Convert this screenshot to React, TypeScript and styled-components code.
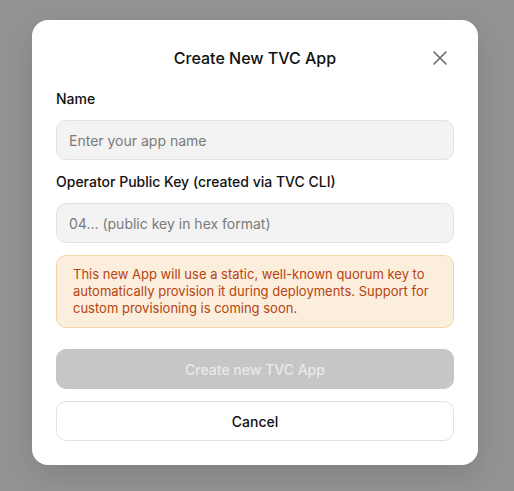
import React from "react";
import styled, { createGlobalStyle } from "styled-components";
import { X } from "lucide-react";

const GlobalStyle = createGlobalStyle`
  html, body {
    margin: 0;
    padding: 0;
    background: #939393;
  }
  * {
    box-sizing: border-box;
  }
  body {
    font-family: Inter, "Noto Sans", "Liberation Sans", sans-serif;
    -webkit-font-smoothing: antialiased;
  }
`;

const Overlay = styled.div`
  min-height: 491px;
  padding: 20px 36px 26px 32px;
  background: #939393;
`;

const Modal = styled.div`
  width: 446px;
  background: #ffffff;
  border-radius: 16px;
  padding: 24px;
  display: flex;
  flex-direction: column;
  box-shadow: 0 10px 30px rgba(0, 0, 0, 0.12);
`;

const Header = styled.div`
  display: grid;
  grid-template-columns: 28px 1fr 28px;
  align-items: center;
  height: 26px;
  margin-bottom: 19px;
`;

const Title = styled.h2`
  grid-column: 2;
  margin: 0;
  text-align: center;
  font-size: 16px;
  line-height: 26px;
  font-weight: 500;
  color: #111111;
`;

const CloseButton = styled.button`
  grid-column: 3;
  width: 28px;
  height: 28px;
  padding: 0;
  border: none;
  background: transparent;
  color: #666666;
  display: flex;
  align-items: center;
  justify-content: center;
  cursor: pointer;
`;

const Label = styled.label`
  display: block;
  font-size: 14px;
  line-height: 20px;
  font-weight: 500;
  color: #111111;
  margin-bottom: 11px;
`;

const Input = styled.input`
  width: 100%;
  height: 40px;
  padding: 0 12px;
  border: 1px solid #e2e2e2;
  border-radius: 10px;
  background: #f3f3f3;
  font-family: inherit;
  font-size: 14px;
  color: #111111;
  outline: none;
  margin-bottom: 12px;

  &::placeholder {
    color: #7a7a7a;
  }
`;

const Notice = styled.div`
  padding: 10px 16px;
  border: 1px solid #f5d5a6;
  border-radius: 10px;
  background: #fbeedd;
  color: #b8430f;
  font-size: 13px;
  line-height: 17px;
  margin-bottom: 21px;
`;

const Button = styled.button<{ $variant: "primary" | "outline" }>`
  width: 100%;
  height: 40px;
  border-radius: 10px;
  font-family: inherit;
  font-size: 14px;
  font-weight: 500;
  cursor: pointer;
  border: 1px solid
    ${(p) => (p.$variant === "primary" ? "#c6c6c6" : "#e2e2e2")};
  background: ${(p) => (p.$variant === "primary" ? "#c6c6c6" : "#ffffff")};
  color: ${(p) => (p.$variant === "primary" ? "#e9e9e9" : "#111111")};

  &:disabled {
    cursor: not-allowed;
  }

  & + & {
    margin-top: 12px;
  }
`;

const App: React.FC = () => (
  <>
    <GlobalStyle />
    <Overlay>
      <Modal>
        <Header>
          <Title>Create New TVC App</Title>
          <CloseButton aria-label="Close">
            <X size={24} strokeWidth={1.5} />
          </CloseButton>
        </Header>

        <Label htmlFor="app-name">Name</Label>
        <Input id="app-name" placeholder="Enter your app name" />

        <Label htmlFor="operator-key">Operator Public Key (created via TVC CLI)</Label>
        <Input id="operator-key" placeholder="04... (public key in hex format)" />

        <Notice>
          This new App will use a static, well-known quorum key to
          automatically provision it during deployments. Support for custom
          provisioning is coming soon.
        </Notice>

        <Button $variant="primary" disabled>
          Create new TVC App
        </Button>
        <Button $variant="outline">Cancel</Button>
      </Modal>
    </Overlay>
  </>
);

export default App;
